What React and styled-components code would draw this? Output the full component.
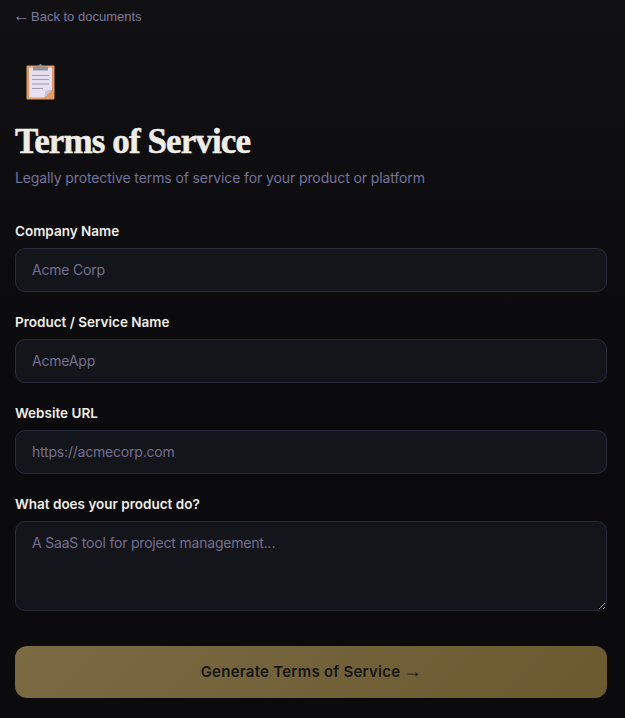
import { createGlobalStyle } from "styled-components";
import styled from "styled-components";

const GlobalStyle = createGlobalStyle`
  html, body {
    margin: 0;
    padding: 0;
    background-color: #0b0b0e;
  }
  * {
    box-sizing: border-box;
  }
`;

const fields = [
  { label: "Company Name", placeholder: "Acme Corp" },
  { label: "Product / Service Name", placeholder: "AcmeApp" },
  { label: "Website URL", placeholder: "https://acmecorp.com" },
];

function ClipboardIcon() {
  return (
    <svg width="29" height="37" viewBox="0 0 29 37">
      <rect x="0.5" y="2.500" width="28" height="34" rx="1" fill="#df9a66" />
      <path d="M3 4.500h23v22l-8 8H3z" fill="#e5dff0" />
      <path d="M18.500 34.500l1-7 6.500-1z" fill="#cbc3d8" />
      <path d="M7 7.500V4.500q0-1 1-1h4.500q.5-2.500 2-2.500t2 2.500H21q1 0 1 1v3z" fill="#96909c" />
      <rect x="6" y="12" width="17" height="1" fill="#a09bad" />
      <rect x="6" y="16" width="17" height="1" fill="#a09bad" />
      <rect x="6" y="20.500" width="17" height="1" fill="#a09bad" />
      <rect x="6" y="25" width="11" height="1" fill="#a09bad" />
    </svg>
  );
}

export default function App() {
  return (
    <Page>
      <GlobalStyle />
      <BackLink><BackArrow>←</BackArrow>Back to documents</BackLink>
      <IconRow>
        <ClipboardIcon />
      </IconRow>
      <Title>Terms of Service</Title>
      <Subtitle>Legally protective terms of service for your product or platform</Subtitle>
      <Form>
        {fields.map((field) => (
          <Field key={field.label}>
            <Label>{field.label}</Label>
            <Input placeholder={field.placeholder} />
          </Field>
        ))}
        <Field>
          <Label>What does your product do?</Label>
          <TextArea placeholder="A SaaS tool for project management..." />
        </Field>
      </Form>
      <GenerateButton>Generate Terms of Service<NextArrow>→</NextArrow></GenerateButton>
    </Page>
  );
}

const Page = styled.div`
  width: 625px;
  height: 718px;
  overflow: hidden;
  padding: 8px 18px 0 15px;
  background: linear-gradient(180deg, #111113 0%, #0b0b0e 45%);
  font-family: "Inter", "Liberation Sans", sans-serif;
`;
const BackLink = styled.div`
  display: flex;
  align-items: center;
  height: 17px;
  font-family: "Liberation Sans", sans-serif;
  font-size: 13px;
  line-height: 17px;
  color: #7d7a9c;
`;
const BackArrow = styled.span`
  width: 18px;
  height: 17px;
  margin-left: -2px;
  font-size: 17px;
  line-height: 15px;
`;
const NextArrow = styled.span`
  margin-left: 3px;
  font-family: "Liberation Sans", sans-serif;
  font-size: 18px;
  line-height: 15px;
  font-weight: 400;
  letter-spacing: 0;
`;
const IconRow = styled.div`
  display: flex;
  height: 38px;
  margin-top: 38px;
  padding-left: 10.500px;
`;
const Title = styled.h1`
  margin: 21px 0 0;
  height: 40px;
  font-family: "Liberation Serif", serif;
  font-size: 35px;
  font-weight: 700;
  line-height: 40px;
  letter-spacing: -0.9px;
  -webkit-text-stroke: 0.5px #f0ede6;
  color: #f0ede6;
`;
const Subtitle = styled.p`
  margin: 6px 0 0;
  height: 20px;
  font-size: 14px;
  line-height: 20px;
  letter-spacing: -0.11px;
  color: #75739a;
`;
const Form = styled.div`
  display: flex;
  flex-direction: column;
  gap: 21px;
  margin-top: 34px;
`;
const Field = styled.div`
  display: flex;
  flex-direction: column;
  gap: 8px;
`;
const Label = styled.label`
  height: 18px;
  font-size: 13.500px;
  font-weight: 600;
  line-height: 18px;
  color: #f0ede6;
`;
const Input = styled.input`
  width: 100%;
  height: 44px;
  padding: 0 16px 2px;
  background-color: #14151b;
  border: 1px solid #2a2a3c;
  border-radius: 10px;
  outline: none;
  font-family: inherit;
  font-size: 14px;
  letter-spacing: -0.2px;
  color: #f0ede6;
  &::placeholder {
    color: #736f8e;
    opacity: 1;
  }
`;
const TextArea = styled.textarea`
  display: block;
  width: 100%;
  height: 90px;
  padding: 11px 16px;
  background-color: #14151b;
  border: 1px solid #2a2a3c;
  border-radius: 10px;
  outline: none;
  font-family: inherit;
  font-size: 14px;
  line-height: 20px;
  letter-spacing: -0.2px;
  color: #f0ede6;
  &::placeholder {
    color: #736f8e;
    opacity: 1;
  }
`;
const GenerateButton = styled.button`
  display: block;
  width: 100%;
  height: 52px;
  margin-top: 35px;
  padding-bottom: 2px;
  background: linear-gradient(135deg, #7b6a42 0%, #6b5a30 100%);
  border: none;
  border-radius: 12px;
  font-family: inherit;
  font-size: 15px;
  font-weight: 600;
  letter-spacing: 0.25px;
  color: #161616;
`;
